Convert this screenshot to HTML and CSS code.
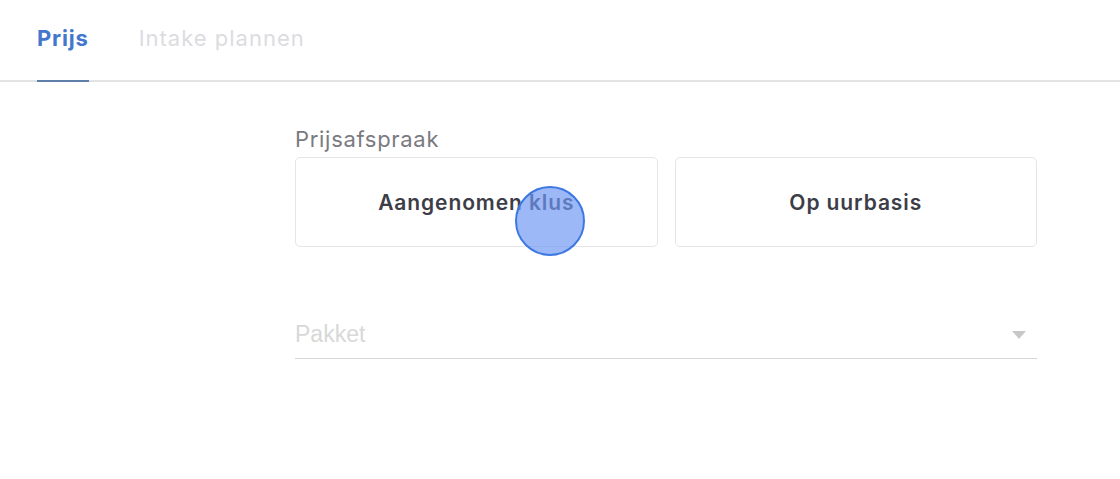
FILE: index.html
```html
<!DOCTYPE html>
<html lang="nl">
<head>
<meta charset="utf-8">
<link rel="stylesheet" href="styles.css">
</head>
<body>
<div class="page">
  <nav class="tabs">
    <div class="tab active">Prijs</div>
    <div class="tab">Intake plannen</div>
  </nav>
  <main class="content">
    <div class="form">
      <div class="label">Prijsafspraak</div>
      <div class="options">
        <div class="option">Aangenomen klus<span class="touch"></span></div>
        <div class="option">Op uurbasis</div>
      </div>
      <div class="select">
        <span class="placeholder">Pakket</span>
        <span class="arrow"></span>
      </div>
    </div>
  </main>
</div>
</body>
</html>
```
FILE: styles.css
```css
html, body {
  margin: 0;
  padding: 0;
  background: #ffffff;
}
.page {
  width: 1120px;
  height: 479px;
  overflow: hidden;
  font-family: Inter, "Noto Sans", sans-serif;
}
.tabs {
  display: flex;
  gap: 50px;
  padding: 0 37px;
  height: 80px;
  border-bottom: 2px solid #e3e3e5;
}
.tab {
  font-size: 22px;
  line-height: 77px;
  color: #dcdce0;
  letter-spacing: 1px;
}
.tab.active {
  font-weight: 700;
  color: #4377cf;
  letter-spacing: 0.8px;
  box-shadow: inset 0 -2px 0 #5e7fa7;
  margin-bottom: -2px;
  height: 82px;
}
.content {
  padding-left: 295px;
  padding-top: 42px;
}
.form {
  width: 742px;
}
.label {
  font-size: 22px;
  color: #7a7a80;
  line-height: 30px;
  height: 33px;
  letter-spacing: 0.7px;
}
.options {
  display: flex;
  gap: 17px;
}
.option {
  position: relative;
  flex: 1;
  height: 88px;
  border: 1px solid #e6e6e8;
  border-radius: 5px;
  display: flex;
  align-items: center;
  justify-content: center;
  font-size: 21px;
  font-weight: 600;
  color: #3d3d47;
  letter-spacing: 0.9px;
}
.touch {
  position: absolute;
  left: 219px;
  top: 28px;
  width: 66px;
  height: 66px;
  border-radius: 50%;
  border: 2px solid #3c77e2;
  background: rgba(110, 150, 243, 0.68);
}
.select {
  margin-top: 71px;
  height: 40px;
  border-bottom: 1.5px solid #d6d6d6;
  display: flex;
  align-items: center;
  justify-content: space-between;
  padding-right: 11px;
}
.placeholder {
  font-family: "Liberation Sans", Arial, sans-serif;
  font-size: 23px;
  color: #d8d8d8;
  margin-top: -8px;
}
.arrow {
  width: 0;
  height: 0;
  border-left: 7.5px solid transparent;
  border-right: 7.5px solid transparent;
  border-top: 8px solid #c8c8c8;
  margin-top: -6px;
}
```
